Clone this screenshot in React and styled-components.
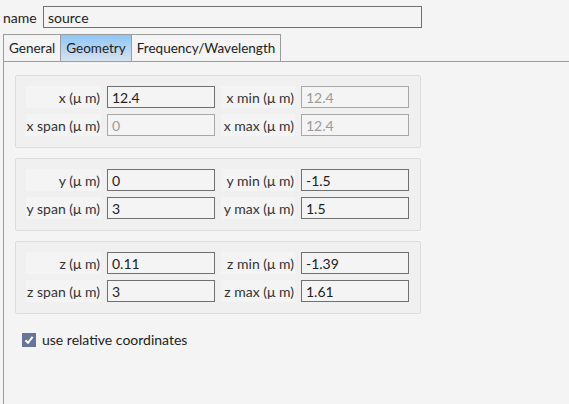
import styled, { createGlobalStyle } from "styled-components"

const Global = createGlobalStyle`
    html, body {
        margin: 0;
        padding: 0;
        background: #f4f4f4;
        font-family: "Lato", "Noto Sans", sans-serif;
        font-size: 14px;
        color: #222;
        overflow: hidden;
    }
`

const Page = styled.div`
    width: 569px;
    height: 404px;
    padding: 6px 0 0 3px;
    box-sizing: border-box;
    display: flex;
    flex-direction: column;
`

const NameRow = styled.div`
    display: flex;
    align-items: center;
    gap: 6px;
    height: 22px;
`

const NameLabel = styled.span`
    width: 34px;
`

const TextBox = styled.div`
    width: ${props => props.width || 108}px;
    height: 22px;
    box-sizing: border-box;
    border: 1px solid ${props => props.disabled ? "#a8a8a8" : "#707070"};
    background: #f4f4f4;
    color: ${props => props.disabled ? "#9a9a9a" : "#222"};
    padding-left: 4px;
    display: flex;
    align-items: center;
    white-space: nowrap;
`

const TabBar = styled.div`
    display: flex;
    margin-top: 6px;
    height: 27px;
`

const Tab = styled.div`
    height: 27px;
    box-sizing: border-box;
    padding: 0 5px;
    font-size: 13.5px;
    border: 1px solid #9c9c9c;
    border-bottom: none;
    margin-left: ${props => props.first ? 0 : -1}px;
    display: flex;
    align-items: center;
    background: ${props => props.active
        ? "linear-gradient(#8ec6f6, #d8e2ee)"
        : "#f4f4f4"};
`

const Panel = styled.div`
    flex: 1;
    border-top: 1px solid #9c9c9c;
    border-left: 1px solid #9c9c9c;
    padding: 13px 0 0 11px;
    display: flex;
    flex-direction: column;
    gap: 10px;
`

const Group = styled.div`
    width: 406px;
    box-sizing: border-box;
    border: 1px solid #dcdcdc;
    border-radius: 2px;
    background: #f0f0f0;
    padding: 10px 0 11px 10px;
    display: grid;
    grid-template-columns: 75px 108px 74px 108px;
    column-gap: 6px;
    row-gap: 6px;
`

const Label = styled.div`
    height: 22px;
    background: #f4f4f4;
    display: flex;
    align-items: center;
    justify-content: flex-end;
    padding-right: 1px;
    white-space: nowrap;
    color: #333;
`

const CheckRow = styled.label`
    display: flex;
    align-items: center;
    gap: 6px;
    margin: 7px 0 0 7px;
`

const CheckBox = styled.span`
    width: 14px;
    height: 14px;
    background: #68759b;
    display: flex;
    align-items: center;
    justify-content: center;
`

const axes = [
    { a: "x", v: "12.4", span: "0", min: "12.4", max: "12.4", disabled: true },
    { a: "y", v: "0", span: "3", min: "-1.5", max: "1.5" },
    { a: "z", v: "0.11", span: "3", min: "-1.39", max: "1.61" },
]

const unit = "(μ m)"

const App = () => {
    return (
        <Page>
            <Global />
            <NameRow>
                <NameLabel>name</NameLabel>
                <TextBox width={379}>source</TextBox>
            </NameRow>
            <TabBar>
                <Tab first>General</Tab>
                <Tab active>Geometry</Tab>
                <Tab>Frequency/Wavelength</Tab>
            </TabBar>
            <Panel>
                {axes.map(ax => (
                    <Group key={ax.a}>
                        <Label>{ax.a} {unit}</Label>
                        <TextBox>{ax.v}</TextBox>
                        <Label>{ax.a} min {unit}</Label>
                        <TextBox disabled={ax.disabled}>{ax.min}</TextBox>
                        <Label>{ax.a} span {unit}</Label>
                        <TextBox disabled={ax.disabled}>{ax.span}</TextBox>
                        <Label>{ax.a} max {unit}</Label>
                        <TextBox disabled={ax.disabled}>{ax.max}</TextBox>
                    </Group>
                ))}
                <CheckRow>
                    <CheckBox>
                        <svg width="10" height="10" viewBox="0 0 10 10">
                            <path d="M1.5 5.2 L4 7.8 L8.6 1.8" stroke="#fff" strokeWidth="2" fill="none" />
                        </svg>
                    </CheckBox>
                    use relative coordinates
                </CheckRow>
            </Panel>
        </Page>
    )
}

export default App
